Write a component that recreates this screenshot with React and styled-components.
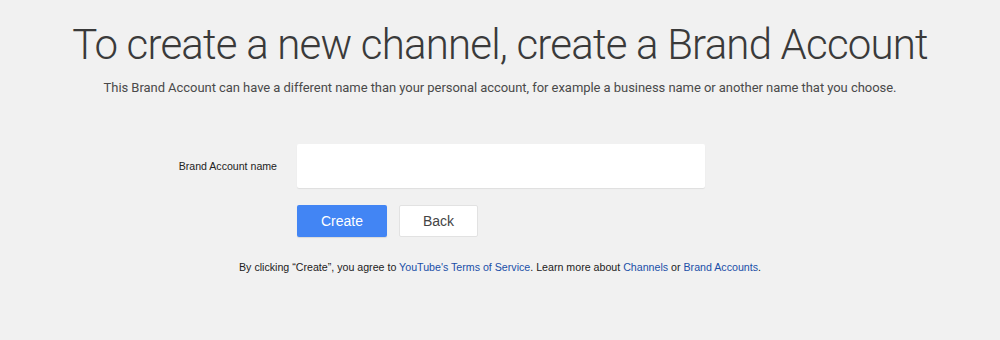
import React from 'react';
import styled, { createGlobalStyle } from 'styled-components';

const GlobalStyle = createGlobalStyle`
  html, body {
    margin: 0;
    padding: 0;
    background: #f1f1f1;
  }
  a { text-decoration: none; }
`;

export default function App() {
  return (
    <>
      <GlobalStyle />
      <Page>
        <Title>To create a new channel, create a Brand Account</Title>
        <Subtitle>
          This Brand Account can have a different name than your personal account, for example a business name or another name that you choose.
        </Subtitle>
        <Form>
          <Label>Brand Account name</Label>
          <Input type="text" />
          <Buttons>
            <Button primary>Create</Button>
            <Button>Back</Button>
          </Buttons>
        </Form>
        <Footer>
          By clicking “Create”, you agree to <Link href="#">YouTube's Terms of Service</Link>. Learn more about <Link href="#">Channels</Link> or <Link href="#">Brand Accounts</Link>.
        </Footer>
      </Page>
    </>
  );
}

const Page = styled.div`
  width: 1000px;
  height: 340px;
  display: flex;
  flex-direction: column;
  align-items: center;
  padding-top: 18px;
  box-sizing: border-box;
`;

const Title = styled.h1`
  margin: 0;
  font-family: Roboto, sans-serif;
  font-weight: 300;
  font-size: 42px;
  line-height: 54px;
  color: #3a3a3a;
  letter-spacing: -0.8px;
`;

const Subtitle = styled.p`
  margin: 7px 0 0;
  font-family: Roboto, sans-serif;
  font-size: 13px;
  line-height: 18px;
  color: #4a4a4a;
  letter-spacing: -0.05px;
`;

const Form = styled.div`
  margin-top: 47px;
  display: grid;
  grid-template-columns: 1fr 408px 1fr;
  column-gap: 20px;
  row-gap: 17px;
  width: 100%;
  padding-left: 2px;
  box-sizing: border-box;
  align-items: center;
`;

const Label = styled.label`
  justify-self: end;
  font-family: 'Liberation Sans', Arial, sans-serif;
  font-size: 10.6px;
  color: #222;
`;

const Input = styled.input`
  grid-column: 2;
  height: 44px;
  box-sizing: border-box;
  border: none;
  border-radius: 2px;
  background: #fff;
  box-shadow: 0 1px 1px rgba(0, 0, 0, 0.08);
  outline: none;
`;

const Buttons = styled.div`
  grid-column: 2;
  display: flex;
  gap: 12px;
`;

const Button = styled.button`
  height: 32px;
  width: ${p => (p.primary ? '90px' : '79px')};
  border: ${p => (p.primary ? 'none' : '1px solid #e2e2e2')};
  border-radius: 2px;
  background: ${p => (p.primary ? '#4285f4' : '#fff')};
  color: ${p => (p.primary ? '#fff' : '#444')};
  font-family: 'Liberation Sans', Arial, sans-serif;
  font-size: 14px;
  box-sizing: border-box;
  cursor: pointer;
  box-shadow: ${p => (p.primary ? '0 1px 1px rgba(0,0,0,0.1)' : 'none')};
`;

const Footer = styled.p`
  margin: 24px 0 0;
  font-family: 'Liberation Sans', Arial, sans-serif;
  font-size: 10.65px;
  color: #222;
`;

const Link = styled.a`
  color: #1a4fa8;
`;
